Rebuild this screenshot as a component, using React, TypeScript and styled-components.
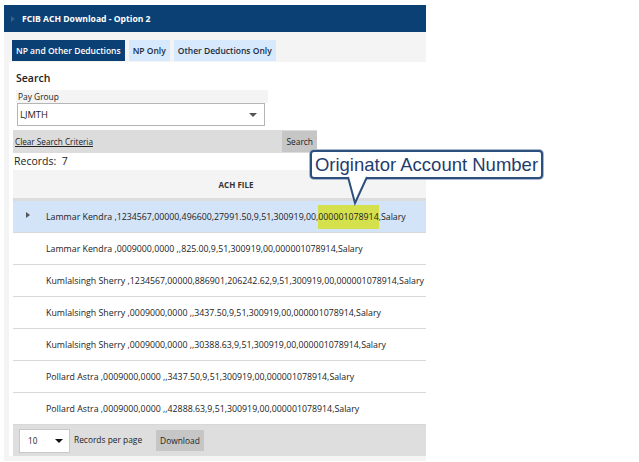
import React from "react";
import styled, { createGlobalStyle } from "styled-components";

const GlobalStyle = createGlobalStyle`
  body {
    margin: 0;
    background: #fff;
    font-family: "Open Sans", "DejaVu Sans", sans-serif;
    color: #222;
  }
`;

const Page = styled.div`
  position: relative;
  width: 639px;
  height: 462px;
  overflow: hidden;
  padding-top: 5px;
  box-sizing: border-box;
`;

const Panel = styled.div`
  margin-left: 4px;
  width: 422px;
  background: #f4f4f4;
  padding-bottom: 5px;
`;

const Header = styled.div`
  height: 27px;
  background: #0b4074;
  display: flex;
  align-items: center;
  padding-left: 7px;
  gap: 7px;
  color: #fff;
  font-weight: 700;
  font-size: 8.6px;
`;

const HeaderIcon = styled.span`
  width: 0;
  height: 0;
  border-top: 3.5px solid transparent;
  border-bottom: 3.5px solid transparent;
  border-left: 4px solid #3a5f86;
`;

const TabBar = styled.div`
  height: 30px;
  box-sizing: border-box;
  padding: 8px 0 0 8px;
  display: flex;
  gap: 4px;
`;

const Tab = styled.div<{ $active?: boolean }>`
  height: 21px;
  padding: 0 4px;
  display: flex;
  align-items: center;
  font-size: 8.5px;
  font-weight: 600;
  background: ${(p) => (p.$active ? "#0b4074" : "#d7e9fc")};
  color: ${(p) => (p.$active ? "#fff" : "#1b2b3c")};
`;

const Content = styled.div`
  margin-left: 5px;
  background: #fff;
  padding-left: 4px;
`;

const SearchTitle = styled.div`
  padding: 9px 0 0 3px;
  height: 19px;
  font-size: 10.5px;
  font-weight: 600;
  color: #222;
`;

const SearchForm = styled.div`
  width: 304px;
`;

const FieldLabel = styled.div`
  margin-left: 3px;
  width: 250px;
  height: 13px;
  background: #f4f4f4;
  font-size: 8.4px;
  line-height: 13px;
  padding-left: 2px;
`;

const SelectBox = styled.div`
  margin-left: 4px;
  width: 248px;
  height: 23px;
  box-sizing: border-box;
  border: 1px solid #b5b5b5;
  display: flex;
  align-items: center;
  justify-content: space-between;
  padding: 0 7px 0 2px;
  font-size: 9.4px;
`;

const Caret = styled.span<{ $size?: number; $color?: string }>`
  width: 0;
  height: 0;
  border-left: ${(p) => p.$size ?? 4}px solid transparent;
  border-right: ${(p) => p.$size ?? 4}px solid transparent;
  border-top: ${(p) => (p.$size ?? 4) * 1.1}px solid ${(p) => p.$color ?? "#555"};
`;

const SearchBar = styled.div`
  margin-top: 4px;
  height: 23px;
  background: #dcdcdc;
  display: flex;
  align-items: center;
  justify-content: space-between;
  padding-left: 2px;
`;

const ClearLink = styled.a`
  font-size: 8.2px;
  color: #222;
  text-decoration: underline;
`;

const GrayButton = styled.div`
  height: 21px;
  padding: 0 4px;
  display: flex;
  align-items: center;
  background: #c6c6c6;
  font-size: 8.4px;
  color: #222;
`;

const Records = styled.div`
  height: 17px;
  font-size: 10.5px;
  line-height: 17px;
  padding-left: 1px;
  color: #222;
`;

const Grid = styled.div`
  overflow: hidden;
`;

const GridHeader = styled.div`
  height: 28px;
  background: #f4f4f4;
  border-bottom: 3px solid #dcdcdc;
  display: flex;
  align-items: center;
  padding-left: 33px;
  font-size: 8px;
  font-weight: 700;
  color: #333;
`;

const HeaderLabel = styled.div`
  flex: 1;
  text-align: center;
`;

const Row = styled.div<{ $selected?: boolean }>`
  height: 31px;
  border-bottom: 1px solid #d8d8d8;
  background: ${(p) => (p.$selected ? "#d3e4f9" : "#fff")};
  display: flex;
  align-items: center;
  white-space: nowrap;
  font-size: 8.8px;
  color: #222;
`;

const Expander = styled.div`
  width: 33px;
  flex: none;
  display: flex;
  justify-content: center;
  padding-right: 4px;
  box-sizing: border-box;
`;

const RowArrow = styled.span`
  width: 0;
  height: 0;
  border-top: 3px solid transparent;
  border-bottom: 3px solid transparent;
  border-left: 4px solid #555;
  margin-bottom: 4px;
`;

const Mark = styled.span`
  background: #d4e04c;
  padding: 6px 0;
`;

const Pager = styled.div`
  height: 31px;
  background: #dedede;
  display: flex;
  align-items: center;
  padding-left: 6px;
  gap: 4px;
  font-size: 8.4px;
  color: #222;
`;

const PageSize = styled.div`
  width: 51px;
  height: 24px;
  box-sizing: border-box;
  background: #fff;
  border: 1px solid #c8c8c8;
  display: flex;
  align-items: center;
  justify-content: space-between;
  padding: 0 6px 0 8px;
  font-size: 8.2px;
`;

const PagerLabel = styled.span`
  margin-right: 10px;
  margin-bottom: 3px;
`;

const Callout = styled.div`
  position: absolute;
  left: 310px;
  top: 150px;
  width: 233px;
  height: 29px;
  box-sizing: border-box;
  border: 2px solid #2c4f7e;
  border-radius: 4px;
  background: #fff;
  box-shadow: 0 0 0 1px #a9b8cc;
  display: flex;
  align-items: center;
  justify-content: center;
  font-family: "Liberation Sans", Arial, sans-serif;
  font-size: 18.5px;
  color: #1f3d6c;
`;

const Pointer = styled.svg`
  position: absolute;
  left: 344px;
  top: 176px;
`;

const rows = [
  "Lammar Kendra ,0009000,0000 ,,825.00,9,51,300919,00,000001078914,Salary",
  "Kumlalsingh Sherry ,1234567,00000,886901,206242.62,9,51,300919,00,000001078914,Salary",
  "Kumlalsingh Sherry ,0009000,0000 ,,3437.50,9,51,300919,00,000001078914,Salary",
  "Kumlalsingh Sherry ,0009000,0000 ,,30388.63,9,51,300919,00,000001078914,Salary",
  "Pollard Astra ,0009000,0000 ,,3437.50,9,51,300919,00,000001078914,Salary",
  "Pollard Astra ,0009000,0000 ,,42888.63,9,51,300919,00,000001078914,Salary",
];

export default function App() {
  return (
    <Page>
      <GlobalStyle />
      <Panel>
        <Header>
          <HeaderIcon />
          FCIB ACH Download - Option 2
        </Header>
        <TabBar>
          <Tab $active>NP and Other Deductions</Tab>
          <Tab>NP Only</Tab>
          <Tab>Other Deductions Only</Tab>
        </TabBar>
        <Content>
          <SearchTitle>Search</SearchTitle>
          <SearchForm>
            <FieldLabel>Pay Group</FieldLabel>
            <SelectBox>
              LJMTH
              <Caret />
            </SelectBox>
            <SearchBar>
              <ClearLink>Clear Search Criteria</ClearLink>
              <GrayButton>Search</GrayButton>
            </SearchBar>
          </SearchForm>
          <Records>Records:&nbsp; 7</Records>
          <Grid>
            <GridHeader>
              <HeaderLabel>ACH FILE</HeaderLabel>
            </GridHeader>
            <Row $selected>
              <Expander>
                <RowArrow />
              </Expander>
              Lammar Kendra ,1234567,00000,496600,27991.50,9,51,300919,00,
              <Mark>000001078914</Mark>,Salary
            </Row>
            {rows.map((r, i) => (
              <Row key={i}>
                <Expander />
                {r}
              </Row>
            ))}
            <Pager>
              <PageSize>
                10
                <Caret $size={4} $color="#111" />
              </PageSize>
              <PagerLabel>Records per page</PagerLabel>
              <GrayButton>Download</GrayButton>
            </Pager>
          </Grid>
        </Content>
      </Panel>
      <Callout>Originator Account Number</Callout>
      <Pointer width="30" height="30" viewBox="0 0 30 30">
        <path d="M4 1 L11 27 L23 1" fill="#fff" stroke="#2c4f7e" strokeWidth="2" strokeLinejoin="miter" />
      </Pointer>
    </Page>
  );
}
